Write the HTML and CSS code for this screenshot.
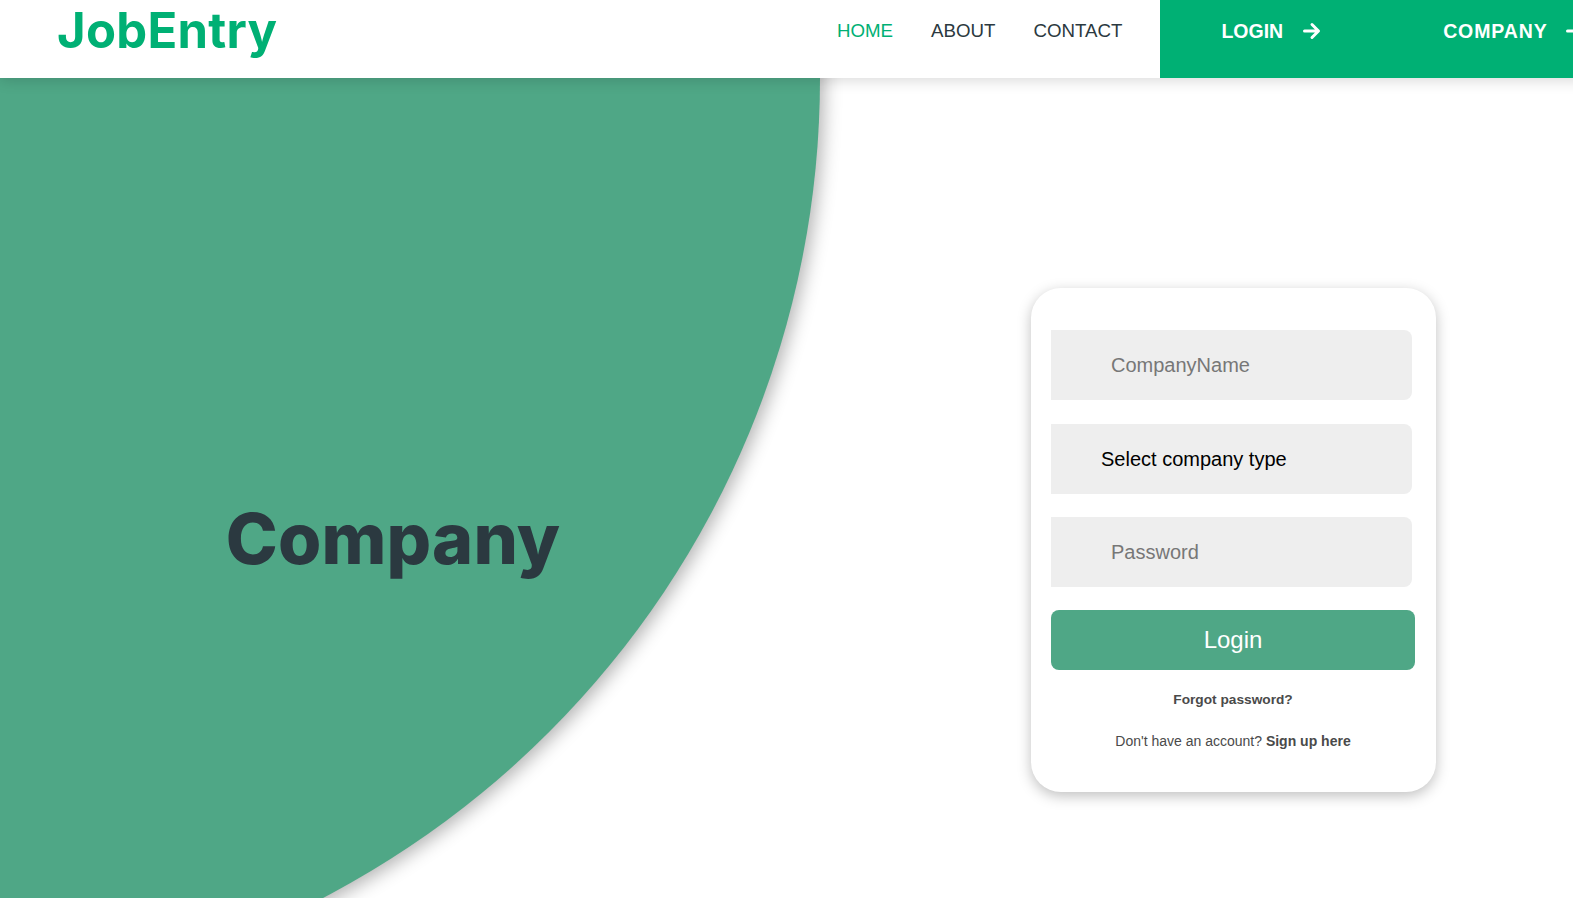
FILE: index.html
```html
<!DOCTYPE html>
<html lang="en">
<head>
<meta charset="utf-8">
<title>JobEntry - Company Login</title>
<link rel="stylesheet" href="styles.css">
</head>
<body>
<header class="topbar">
  <div class="brand">JobEntry</div>
  <nav class="nav">
    <a class="nav-link active" href="#">HOME</a>
    <a class="nav-link" href="#">ABOUT</a>
    <a class="nav-link" href="#">CONTACT</a>
  </nav>
  <a class="cta" href="#">LOGIN
    <svg class="arrow" viewBox="0 0 18 18" width="18" height="18"><path d="M1.5 9H15M9 2.5L15.5 9L9 15.5" fill="none" stroke="#fff" stroke-width="3" stroke-linecap="round" stroke-linejoin="round"/></svg>
  </a>
  <a class="cta cta-wide" href="#">COMPANY
    <svg class="arrow" viewBox="0 0 18 18" width="18" height="18"><path d="M1.5 9H15M9 2.5L15.5 9L9 15.5" fill="none" stroke="#fff" stroke-width="3" stroke-linecap="round" stroke-linejoin="round"/></svg>
  </a>
</header>
<main class="hero">
  <div class="blob"></div>
  <section class="panel-left">
    <h1 class="title">Company</h1>
  </section>
  <section class="panel-right">
    <form class="card">
      <input class="field" type="text" placeholder="CompanyName">
      <select class="field select">
        <option>Select company type</option>
      </select>
      <input class="field" type="password" placeholder="Password">
      <button class="btn" type="button">Login</button>
      <p class="forgot">Forgot password?</p>
      <p class="signup">Don't have an account? <b>Sign up here</b></p>
    </form>
  </section>
</main>
</body>
</html>
```

FILE: styles.css
```css
html, body {
  margin: 0;
  padding: 0;
  overflow: hidden;
  height: 100%;
  background: #fff;
  font-family: "Liberation Sans", Arial, sans-serif;
}

.topbar {
  position: relative;
  z-index: 5;
  display: flex;
  align-items: stretch;
  height: 78px;
  width: max-content;
  min-width: 100vw;
  background: #fff;
  box-shadow: 0 2px 14px rgba(0, 0, 0, 0.16);
}

.brand {
  flex: 0 0 auto;
  box-sizing: border-box;
  width: 837px;
  padding-left: 57px;
  font-family: Inter, sans-serif;
  font-weight: 700;
  font-size: 49px;
  line-height: 62px;
  color: #00b074;
  letter-spacing: 0.3px;
}

.nav {
  display: flex;
  flex: 0 0 auto;
}

.nav-link {
  margin-right: 38px;
  font-size: 18.7px;
  line-height: 62px;
  color: #2b3940;
  text-decoration: none;
}

.nav-link.active {
  color: #00b074;
}

.cta {
  flex: 0 0 auto;
  display: flex;
  align-items: flex-start;
  gap: 20px;
  padding: 0 61px;
  background: #00b074;
  color: #fff;
  font-weight: 700;
  font-size: 19.5px;
  line-height: 62px;
  text-decoration: none;
}

.cta-wide {
  letter-spacing: 0.9px;
  gap: 18px;
}

.arrow {
  margin-top: 22px;
}

.hero {
  position: relative;
  box-sizing: border-box;
  display: grid;
  grid-template-columns: 786px 1fr;
  align-items: center;
  height: 820px;
  padding-top: 100px;
}

.blob {
  position: absolute;
  left: -1030px;
  top: -925px;
  width: 1850px;
  height: 1850px;
  border-radius: 50%;
  background: #4fa786;
  box-shadow: 4px 4px 18px rgba(0, 0, 0, 0.3);
}

.panel-left {
  position: relative;
  text-align: center;
}

.title {
  margin: 0;
  font-family: Inter, sans-serif;
  font-weight: 800;
  font-size: 70px;
  color: #2b3940;
  letter-spacing: 0.2px;
}

.panel-right {
  position: relative;
  padding-left: 245px;
  padding-top: 4px;
}

.card {
  box-sizing: border-box;
  width: 405px;
  padding: 42px 21px 43px 20px;
  background: #fff;
  border-radius: 30px;
  box-shadow: 0 4px 14px rgba(0, 0, 0, 0.25);
  display: flex;
  flex-direction: column;
  align-items: stretch;
}

.field {
  box-sizing: border-box;
  width: 361px;
  height: 70px;
  margin: 0 0 24px;
  padding: 0 0 0 60px;
  border: none;
  border-radius: 0 8px 8px 0;
  background: #eeeeee;
  font-family: "Liberation Sans", Arial, sans-serif;
  font-size: 20px;
  color: #000;
  outline: none;
}

.field::placeholder {
  color: #777;
}

.select {
  appearance: none;
  -webkit-appearance: none;
  padding-left: 50px;
  color: #000;
}

.field:last-of-type {
  margin-bottom: 23px;
}

.btn {
  height: 60px;
  border: none;
  border-radius: 8px;
  background: #4fa786;
  color: #fff;
  font-family: "Liberation Sans", Arial, sans-serif;
  font-size: 24px;
  cursor: pointer;
}

.forgot {
  margin: 22px 0 0;
  text-align: center;
  font-size: 13.7px;
  font-weight: 700;
  line-height: 16px;
  color: #4a4a4a;
}

.signup {
  margin: 25px 0 0;
  text-align: center;
  font-size: 14px;
  line-height: 16px;
  color: #4a4a4a;
}
```
